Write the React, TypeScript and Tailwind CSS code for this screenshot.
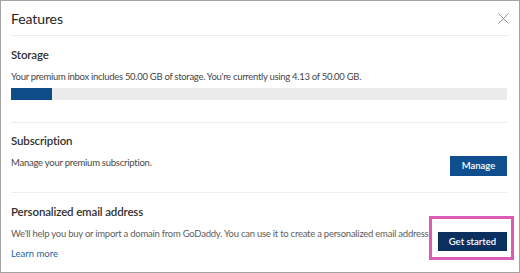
import { X } from "lucide-react";

const font = { fontFamily: 'Lato, "Noto Sans", sans-serif' };

function Section({
  title,
  children,
}: {
  title: string;
  children: React.ReactNode;
}) {
  return (
    <div>
      <h2 className="text-[11.5px] leading-[16px] font-semibold tracking-[-0.15px] text-[#323130]">{title}</h2>
      {children}
    </div>
  );
}

export default function App() {
  return (
    <div
      className="w-[520px] h-[273px] bg-white border border-[#a3a3a3] pl-[10px] pr-[12px] text-[#323130] overflow-hidden"
      style={font}
    >
      <div className="flex items-start justify-between h-[35px] pt-[8px] border-b border-[#ededed] mr-[-2px]">
        <h1 className="text-[14px] leading-[20px] tracking-[-0.1px] text-[#252423]">Features</h1>
        <X className="w-[19px] h-[19px] mr-[-4px] text-[#7a7a7a]" strokeWidth={1} />
      </div>

      <div className="pt-[11px] pb-[22px] border-b border-[#ededed]">
        <Section title="Storage">
          <p className="mt-[7px] text-[9.5px] leading-[14px] tracking-[-0.3px] text-[#484644] whitespace-nowrap">
            Your premium inbox includes 50.00 GB of storage. You're currently using 4.13 of 50.00 GB.
          </p>
          <div className="mt-[4px] h-[12px] bg-[#ebebeb] flex">
            <div className="w-[41px] h-full bg-[#0f4c8a]" />
          </div>
        </Section>
      </div>

      <div className="pt-[10px] pb-[16px] border-b border-[#ededed]">
        <Section title="Subscription">
          <div className="mt-[7px] flex items-start justify-between">
            <p className="text-[9.5px] leading-[14px] tracking-[-0.25px] text-[#484644]">
              Manage your premium subscription.
            </p>
            <button className="w-[57px] h-[20px] bg-[#0f4f8f] text-white text-[9.5px] font-semibold leading-none">
              Manage
            </button>
          </div>
        </Section>
      </div>

      <div className="pt-[11px]">
        <Section title="Personalized email address">
          <div className="mt-[7px] flex items-start justify-between">
            <div>
              <p className="text-[9.5px] leading-[14px] tracking-[-0.25px] text-[#605e5c] whitespace-nowrap">
                We'll help you buy or import a domain from GoDaddy. You can use it to create a personalized email address.
              </p>
              <a className="block mt-[6px] text-[9.5px] leading-[14px] text-[#1f5f9e]">Learn more</a>
            </div>
            <div className="relative">
              <button className="w-[69px] h-[19px] bg-[#0b2f5f] text-white text-[9.5px] font-semibold leading-none">
                Get started
              </button>
              <div className="absolute left-[-9px] top-[-11px] right-[-7px] bottom-[-9px] border-[3px] border-[#de5bb4]" />
            </div>
          </div>
        </Section>
      </div>
    </div>
  );
}
